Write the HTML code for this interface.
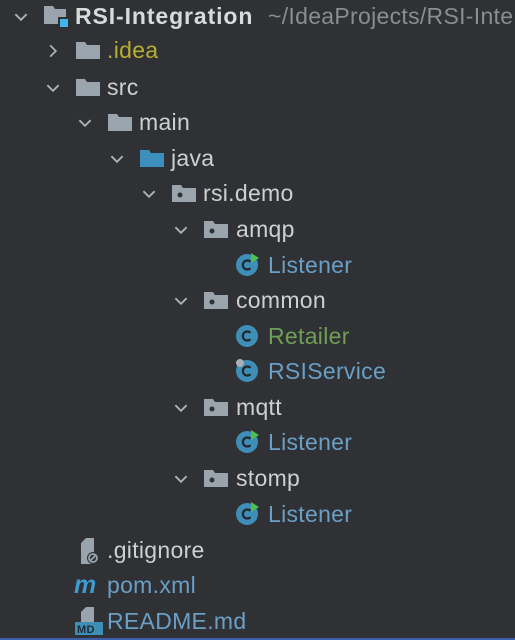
<!DOCTYPE html>
<html><head><style>
body{margin:0;width:515px;height:640px;background:#2f3134;overflow:hidden;font-family:"Liberation Sans",sans-serif;position:relative}
.r{position:absolute;left:0;height:36px;line-height:36px;font-size:23px;letter-spacing:0.3px;color:#cdd0d4;white-space:nowrap}
.r svg{position:absolute;top:0}
.t{position:absolute;top:0}
</style></head><body>
<div style="position:absolute;left:0;right:0;bottom:0;height:2px;background:#3d5ea8"></div>
<svg width="0" height="0" style="position:absolute"><defs>
<symbol id="dn" viewBox="0 0 16 16"><path d="M3 5.5l5 5 5-5" fill="none" stroke="#aeb1b5" stroke-width="1.6"/></symbol>
<symbol id="rt" viewBox="0 0 16 16"><path d="M5.5 3l5 5-5 5" fill="none" stroke="#aeb1b5" stroke-width="1.6"/></symbol>
<symbol id="fd" viewBox="0 0 26 20"><path d="M1 2h9l2 3h13v14H1z" fill="#9aa4ad"/></symbol>
<symbol id="pk" viewBox="0 0 26 20"><path d="M1 2h9l2 3h13v14H1z" fill="#9aa4ad"/><circle cx="9" cy="12" r="2.5" fill="#2f3134"/></symbol>
<symbol id="jv" viewBox="0 0 26 20"><path d="M1 2h9l2 3h13v14H1z" fill="#3d8fbd"/></symbol>
<symbol id="cl" viewBox="0 0 26 26"><circle cx="13" cy="13" r="11" fill="#3e8fb8"/><path d="M16.5 9.8a4.5 4.5 0 1 0 0 6.4" fill="none" stroke="#23272b" stroke-width="2.2"/></symbol>
<symbol id="cr" viewBox="0 0 26 26"><circle cx="13" cy="13" r="11" fill="#3e8fb8"/><path d="M16.5 9.8a4.5 4.5 0 1 0 0 6.4" fill="none" stroke="#23272b" stroke-width="2.2"/><path d="M17 1l8 5-8 5z" fill="#4fc04e"/></symbol>
</defs></svg>

<div class="r" style="top:-2px"><svg style="left:12px;top:10px" width="18" height="18"><use href="#dn"/></svg>
<svg style="left:43px;top:6px" width="28" height="26" viewBox="0 0 28 26"><path d="M1 2h9l2 3h11v15H1z" fill="#9aa4ad"/><rect x="15" y="13" width="11" height="11" fill="#2f3134"/><rect x="17" y="15" width="8" height="8" fill="#3eb8ea"/></svg>
<span class="t" style="left:75px;font-weight:bold;color:#d8dadc;letter-spacing:0.9px">RSI-Integration</span><span class="t" style="left:268px;color:#8a8d91">~/IdeaProjects/RSI-Inte</span></div>

<div class="r" style="top:32px"><svg style="left:44px;top:10px" width="18" height="18"><use href="#rt"/></svg><svg style="left:75px;top:8px" width="26" height="20"><use href="#fd"/></svg><span class="t" style="left:107px;color:#b8ae2e">.idea</span></div>
<div class="r" style="top:69px"><svg style="left:44px;top:10px" width="18" height="18"><use href="#dn"/></svg><svg style="left:75px;top:8px" width="26" height="20"><use href="#fd"/></svg><span class="t" style="left:107px">src</span></div>
<div class="r" style="top:104px"><svg style="left:76px;top:10px" width="18" height="18"><use href="#dn"/></svg><svg style="left:107px;top:8px" width="26" height="20"><use href="#fd"/></svg><span class="t" style="left:139px">main</span></div>
<div class="r" style="top:140px"><svg style="left:108px;top:10px" width="18" height="18"><use href="#dn"/></svg><svg style="left:139px;top:8px" width="26" height="20"><use href="#jv"/></svg><span class="t" style="left:171px">java</span></div>
<div class="r" style="top:175px"><svg style="left:140px;top:10px" width="18" height="18"><use href="#dn"/></svg><svg style="left:171px;top:8px" width="26" height="20"><use href="#pk"/></svg><span class="t" style="left:203px">rsi.demo</span></div>
<div class="r" style="top:211px"><svg style="left:172px;top:10px" width="18" height="18"><use href="#dn"/></svg><svg style="left:203px;top:8px" width="26" height="20"><use href="#pk"/></svg><span class="t" style="left:236px">amqp</span></div>
<div class="r" style="top:247px"><svg style="left:234px;top:5px" width="26" height="26"><use href="#cr"/></svg><span class="t" style="left:268px;color:#6a9fc6">Listener</span></div>
<div class="r" style="top:282px"><svg style="left:172px;top:10px" width="18" height="18"><use href="#dn"/></svg><svg style="left:203px;top:8px" width="26" height="20"><use href="#pk"/></svg><span class="t" style="left:236px">common</span></div>
<div class="r" style="top:318px"><svg style="left:234px;top:5px" width="26" height="26"><use href="#cl"/></svg><span class="t" style="left:268px;color:#6f9f56">Retailer</span></div>
<div class="r" style="top:353px"><svg style="left:234px;top:5px" width="26" height="26"><use href="#cl"/><circle cx="6" cy="5" r="4" fill="#a9b0b6"/></svg><span class="t" style="left:268px;color:#6a9fc6">RSIService</span></div>
<div class="r" style="top:389px"><svg style="left:172px;top:10px" width="18" height="18"><use href="#dn"/></svg><svg style="left:203px;top:8px" width="26" height="20"><use href="#pk"/></svg><span class="t" style="left:236px">mqtt</span></div>
<div class="r" style="top:424px"><svg style="left:234px;top:5px" width="26" height="26"><use href="#cr"/></svg><span class="t" style="left:268px;color:#6a9fc6">Listener</span></div>
<div class="r" style="top:460px"><svg style="left:172px;top:10px" width="18" height="18"><use href="#dn"/></svg><svg style="left:203px;top:8px" width="26" height="20"><use href="#pk"/></svg><span class="t" style="left:236px">stomp</span></div>
<div class="r" style="top:496px"><svg style="left:234px;top:5px" width="26" height="26"><use href="#cr"/></svg><span class="t" style="left:268px;color:#6a9fc6">Listener</span></div>

<div class="r" style="top:532px"><svg style="left:76px;top:5px" width="26" height="28" viewBox="0 0 26 28"><path d="M5 6l5-5h8v26H5z" fill="#9aa4ad"/><circle cx="17" cy="21" r="6" fill="#2f3134"/><circle cx="17" cy="21" r="4" fill="none" stroke="#9aa4ad" stroke-width="1.8"/><path d="M14 24l6-6" stroke="#9aa4ad" stroke-width="1.8"/></svg><span class="t" style="left:107px">.gitignore</span></div>
<div class="r" style="top:567px"><span class="t" style="left:74px;color:#3e9bd0;font-weight:bold;font-style:italic;font-size:25px">m</span><span class="t" style="left:107px;color:#6a9fc6">pom.xml</span></div>
<div class="r" style="top:603px"><svg style="left:74px;top:3px" width="30" height="30" viewBox="0 0 30 30"><path d="M7 6l5-5h8v16H7z" fill="#9aa4ad"/><rect x="1" y="16" width="28" height="13" fill="#3e8fb8"/><text x="3" y="27" font-family="Liberation Sans" font-weight="bold" font-size="11" fill="#1e2a33">MD</text></svg><span class="t" style="left:107px;color:#6a9fc6">README.md</span></div>
</body></html>
